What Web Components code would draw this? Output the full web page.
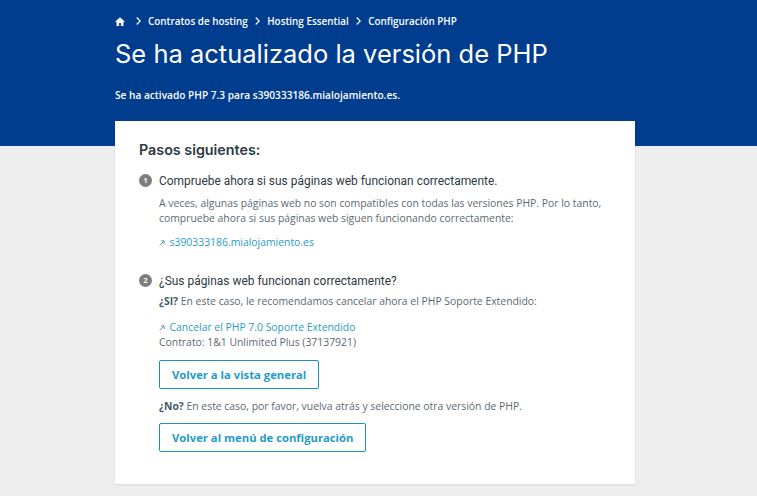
<!DOCTYPE html>
<html lang="es">
<head>
<meta charset="utf-8">
<title>Configuración PHP</title>
<style>
  html, body { margin: 0; background: #eeeeee; }
  body { font-family: "Open Sans", sans-serif; color: #465a65; overflow: hidden; height: 496px; }
</style>
</head>
<body>
<php-hero>
  <php-crumbs slot="crumbs">
    <span>Contratos de hosting</span>
    <span>Hosting Essential</span>
    <span>Configuración PHP</span>
  </php-crumbs>
  <span slot="title">Se ha actualizado la versión de PHP</span>
  Se ha activado PHP 7.3 para s390333186.mialojamiento.es.
</php-hero>
<php-card heading="Pasos siguientes:">
  <php-step num="1" heading="Compruebe ahora si sus páginas web funcionan correctamente.">
    <php-text gap="6" wide>A veces, algunas páginas web no son compatibles con todas las versiones PHP. Por lo tanto, compruebe ahora si sus páginas web siguen funcionando correctamente:</php-text>
    <php-link gap="9">s390333186.mialojamiento.es</php-link>
  </php-step>
  <php-step num="2" heading="¿Sus páginas web funcionan correctamente?" style="margin-top:22px">
    <php-text gap="4"><b>¿SI?</b> En este caso, le recomendamos cancelar ahora el PHP Soporte Extendido:</php-text>
    <php-link gap="11">Cancelar el PHP 7.0 Soporte Extendido</php-link>
    <php-text gap="0">Contrato: 1&amp;1 Unlimited Plus (37137921)</php-text>
    <php-button gap="10">Volver a la vista general</php-button>
    <php-text gap="10"><b>¿No?</b> En este caso, por favor, vuelva atrás y seleccione otra versión de PHP.</php-text>
    <php-button gap="9">Volver al menú de configuración</php-button>
  </php-step>
</php-card>
<script>
"use strict";

function define(name, css, html) {
  customElements.define(name, class extends HTMLElement {
    connectedCallback() {
      if (this.shadowRoot) return;
      const root = this.attachShadow({mode: "open"});
      root.innerHTML = "<style>" + css + "</style>" + html(this);
      if (this.hasAttribute("gap")) this.style.marginTop = this.getAttribute("gap") + "px";
    }
  });
}

// the original page has a 7px scrollbar gutter, so content centres on 750px
define("php-hero", `
  :host { display: block; background: #003d8f; height: 146px; padding-right: 7px; color: #fff; font-size: 10.15px; font-weight: 600; }
  .inner { width: 520px; margin: 0 auto; padding-top: 14px; }
  h1 { margin: 9px 0 0; font: 400 25.5px/34px "Inter", sans-serif; }
  p { margin: 17px 0 0; line-height: 14px; }
`, () => `<div class="inner"><slot name="crumbs"></slot><h1><slot name="title"></slot></h1><p><slot></slot></p></div>`);

define("php-crumbs", `
  :host { display: block; height: 14px; font-size: 9.9px; line-height: 14px; font-weight: 600; color: #fff; }
  .row { display: flex; align-items: center; height: 14px; }
  svg { flex: none; }
  .home { width: 10px; height: 9px; margin-right: 11px; }
  .sep { width: 5px; height: 8px; margin-right: 7px; }
  ::slotted(span) { margin-right: 7.5px; }
`, el => {
  const sep = `<svg class="sep" viewBox="0 0 5 8"><path d="M.7.5 4.2 4 .7 7.5" fill="none" stroke="#fff" stroke-width="1.2"/></svg>`;
  const spans = [...el.querySelectorAll("span")];
  spans.forEach((s, i) => s.slot = "c" + i);
  return `<div class="row"><svg class="home" viewBox="0 0 10 9"><path d="M5 .2 0 4.7h1.5V9h2.6V6h1.8v3h2.6V4.7H10z" fill="#fff"/></svg>`
    + spans.map((s, i) => sep + `<slot name="c${i}"></slot>`).join("") + `</div>`;
});

define("php-card", `
  :host { display: block; box-sizing: border-box; width: 520px; height: 363px; margin: -25px 0 0 115px; padding: 20px 24px 0; background: #fff; box-shadow: 0 1px 2px rgba(0,0,0,.1); position: relative; }
  h2 { margin: 0 0 14px; font: 600 14.3px/17px "Inter", sans-serif; color: #2e3a42; }
`, el => `<h2>${el.getAttribute("heading")}</h2><slot></slot>`);

define("php-step", `
  :host { display: block; position: relative; padding-left: 20px; }
  .num { position: absolute; left: 0; top: 2px; width: 13px; height: 13px; border-radius: 50%; background: #7d7d7d; color: #fff; font: 700 7px/13px "Open Sans", sans-serif; text-align: center; }
  h3 { margin: 0; font: 400 11.95px/18px "Roboto", sans-serif; color: #2e3a42; }
`, el => `<span class="num">${el.getAttribute("num")}</span><h3>${el.getAttribute("heading")}</h3><slot></slot>`);

define("php-text", `
  :host { display: block; font-size: 10.4px; line-height: 15px; color: #5a6a72; }
  :host([wide]) { width: 450px; }
  ::slotted(b) { font-weight: 700; color: #465a65; }
`, () => `<slot></slot>`);

define("php-link", `
  :host { display: block; font-size: 10.4px; line-height: 15px; color: #1f9bca; }
  svg { width: 6px; height: 6px; margin-right: 4.5px; }
`, () => `<svg viewBox="0 0 6 6"><path d="M.6 5.4 5 1M2 .9h3.1V4" fill="none" stroke="#4a93b5" stroke-width=".9"/></svg><slot></slot>`);

define("php-button", `
  :host { display: table; box-sizing: border-box; height: 29px; padding: 0 12px; border: 1px solid #1493c4; border-radius: 2px; font-size: 11.27px; font-weight: 700; line-height: 27px; color: #1f9bca; }
`, () => `<slot></slot>`);
</script>
</body>
</html>
